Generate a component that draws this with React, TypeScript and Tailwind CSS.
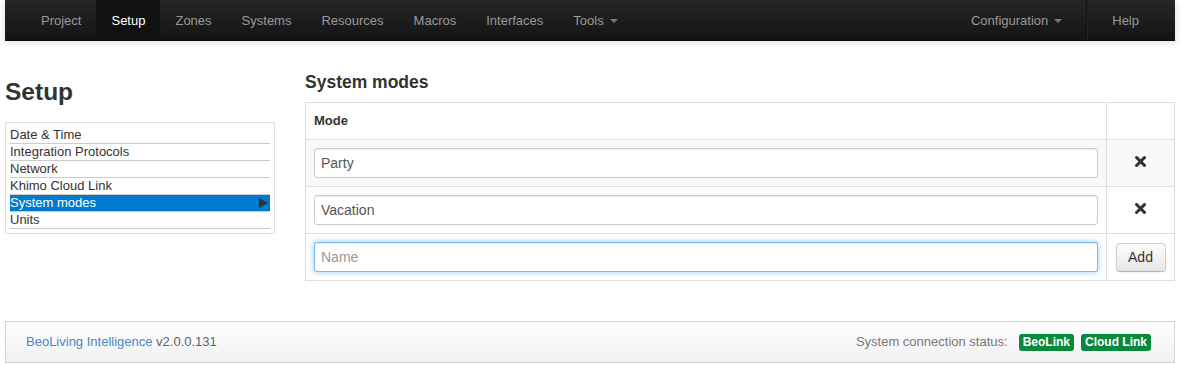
import React from 'react';

const navLeft = ['Project', 'Setup', 'Zones', 'Systems', 'Resources', 'Macros', 'Interfaces'];
const setupLinks = ['Date & Time', 'Integration Protocols', 'Network', 'Khimo Cloud Link', 'System modes', 'Units'];
const modes = ['Party', 'Vacation'];

const Caret = () => (
  <span className="inline-block ml-[6px] align-middle w-0 h-0 border-l-[4px] border-r-[4px] border-t-[4px] border-l-transparent border-r-transparent border-t-[#777]" />
);

const RemoveIcon = () => (
  <svg width="11" height="11" viewBox="0 0 11 11">
    <path d="M1.6 1.6 L9.4 9.4 M9.4 1.6 L1.6 9.4" stroke="#333" strokeWidth="3" strokeLinecap="square" fill="none" />
  </svg>
);

const App: React.FC = () => {
  return (
    <div className="w-[1170px] ml-[5px] font-['Liberation_Sans',Arial,sans-serif] text-[13px] text-[#333]">
      {/* Navbar */}
      <div className="h-[41px] flex items-stretch justify-between px-[21px] bg-gradient-to-b from-[#262626] to-[#141414] border-b border-[#0c0c0c] shadow-[0_1px_8px_rgba(0,0,0,0.15)]">
        <ul className="flex items-stretch">
          {navLeft.map((item) => (
            <li
              key={item}
              className={`flex items-center px-[15px] pt-[1px] leading-[20px] ${
                item === 'Setup' ? 'bg-[#111] text-white' : 'text-[#999]'
              }`}
            >
              {item}
            </li>
          ))}
          <li className="flex items-center px-[15px] pt-[1px] text-[#999]">
            Tools
            <Caret />
          </li>
        </ul>
        <ul className="flex items-stretch">
          <li className="flex items-center px-[15px] pt-[1px] text-[#999]">
            Configuration
            <Caret />
          </li>
          <li className="mx-[9px] border-l border-[#111] border-r border-r-[#222]" />
          <li className="flex items-center px-[15px] pt-[1px] text-[#999]">Help</li>
        </ul>
      </div>

      {/* Content */}
      <div className="flex gap-[30px] pt-[31px]">
        {/* Sidebar */}
        <div className="w-[270px] shrink-0">
          <h1 className="mt-[5px] text-[24.5px] leading-[30px] font-bold text-[#333]">Setup</h1>
          <ul className="mt-[15px] border border-[#ddd] p-[4px]">
            {setupLinks.map((link) => (
              <li
                key={link}
                className={`relative h-[17px] leading-[16px] border-b border-[#ccc] ${
                  link === 'System modes' ? 'bg-[#007acc] text-white' : 'text-[#333]'
                }`}
              >
                {link}
                {link === 'System modes' && (
                  <span className="absolute right-[2px] top-[3px] w-0 h-0 border-t-[5.5px] border-b-[5.5px] border-l-[9px] border-t-transparent border-b-transparent border-l-[#333]" />
                )}
              </li>
            ))}
          </ul>
        </div>

        {/* Main */}
        <div className="flex-1">
          <h3 className="text-[17.5px] leading-[20px] font-bold text-[#333]">System modes</h3>
          <table className="mt-[10px] w-full border-collapse border border-[#ddd]">
            <thead>
              <tr>
                <th className="text-left font-bold text-[13px] leading-[20px] px-[8px] py-[8px] border border-[#ddd]">Mode</th>
                <th className="w-[68px] border border-[#ddd]" />
              </tr>
            </thead>
            <tbody>
              {modes.map((mode, i) => (
                <tr key={mode} className={i === 0 ? 'bg-[#f9f9f9]' : 'bg-white'}>
                  <td className="p-[8px] border border-[#ddd]">
                    <input
                      readOnly
                      value={mode}
                      className="w-full h-[30px] px-[6px] bg-white border border-[#ccc] rounded-[3px] shadow-[inset_0_1px_1px_rgba(0,0,0,0.075)] text-[14px] text-[#555] outline-none font-['Liberation_Sans',Arial,sans-serif]"
                    />
                  </td>
                  <td className="border border-[#ddd] text-center align-middle">
                    <span className="inline-flex items-center justify-center">
                      <RemoveIcon />
                    </span>
                  </td>
                </tr>
              ))}
              <tr className="bg-white">
                <td className="p-[8px] border border-[#ddd]">
                  <input
                    placeholder="Name"
                    className="w-full h-[30px] px-[6px] bg-white border border-[rgba(82,168,236,0.8)] rounded-[3px] shadow-[inset_0_1px_1px_rgba(0,0,0,0.075),0_0_6px_rgba(82,168,236,0.6)] text-[14px] text-[#555] placeholder:text-[#999] outline-none font-['Liberation_Sans',Arial,sans-serif]"
                  />
                </td>
                <td className="border border-[#ddd] text-center align-middle">
                  <button className="w-[50px] h-[29px] text-[14px] text-[#333] bg-gradient-to-b from-white to-[#e6e6e6] border border-[#ccc] border-b-[#b3b3b3] rounded-[4px] shadow-[inset_0_1px_0_rgba(255,255,255,0.2),0_1px_2px_rgba(0,0,0,0.05)]">
                    Add
                  </button>
                </td>
              </tr>
            </tbody>
          </table>
        </div>
      </div>

      {/* Footer */}
      <div className="mt-[40px] h-[42px] flex items-center justify-between pl-[20px] pr-[23px] border border-[#d4d4d4] bg-gradient-to-b from-white to-[#f0f0f0]">
        <div>
          <span className="text-[#4a86c8]">BeoLiving Intelligence</span>
          <span className="text-[#5b6470]"> v2.0.0.131</span>
        </div>
        <div className="flex items-center">
          <span className="text-[#777] mr-[11px]">System connection status:</span>
          <span className="px-[4px] h-[17px] leading-[17px] rounded-[3px] bg-[#08893e] text-white font-bold text-[12px]">BeoLink</span>
          <span className="ml-[7px] px-[4px] h-[17px] leading-[17px] rounded-[3px] bg-[#08893e] text-white font-bold text-[12px]">Cloud Link</span>
        </div>
      </div>
    </div>
  );
};

export default App;
